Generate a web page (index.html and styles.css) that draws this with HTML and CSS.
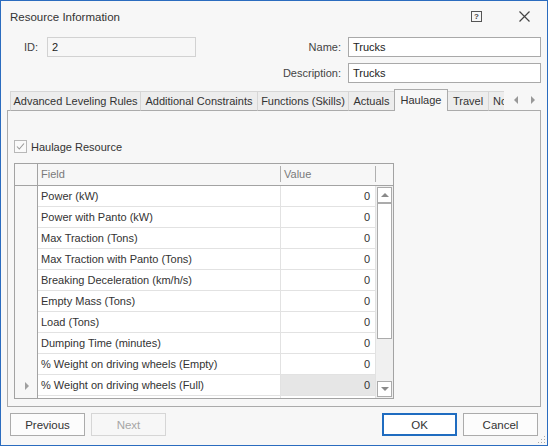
FILE: index.html
```html
<!DOCTYPE html>
<html lang="en">
<head>
    <meta charset="UTF-8">
    <title>Resource Information</title>
    <link rel="stylesheet" href="styles.css">
</head>
<body>

<div class="window">
    <!-- title bar -->
    <div class="titlebar">
        <span class="title">Resource Information</span>
        <span class="tb-help">?</span>
        <span class="tb-close">
            <svg width="11" height="11" viewBox="0 0 11 11"><path d="M0.5 0.5 L10.5 10.5 M10.5 0.5 L0.5 10.5" stroke="#444" stroke-width="1.2" fill="none"/></svg>
        </span>
    </div>

    <!-- ID / Name / Description -->
    <div class="info">
        <span class="lbl">ID:</span>
        <div class="textbox disabled id-box">2</div>
        <span class="lbl lbl-right">Name:</span>
        <div class="textbox">Trucks</div>
        <span class="lbl lbl-right row2">Description:</span>
        <div class="textbox row2">Trucks</div>
    </div>

    <!-- tabs -->
    <div class="tabstrip">
        <div class="tabs">
            <div class="tab" style="width:131px">Advanced Leveling Rules</div>
            <div class="tab" style="width:118px">Additional Constraints</div>
            <div class="tab" style="width:92px">Functions (Skills)</div>
            <div class="tab" style="width:47px">Actuals</div>
            <div class="tab active" style="width:54px">Haulage</div>
            <div class="tab" style="width:42px">Travel</div>
            <div class="tab tab-cut">Notes</div>
        </div>
        <div class="tab-arrows">
            <span class="arrow-left"></span>
            <span class="arrow-right"></span>
        </div>
    </div>

    <div class="page">
        <div class="check-row">
            <span class="cb">
                <svg width="11" height="11" viewBox="0 0 11 11"><path d="M2 5.5 L4.3 8 L9 2.5" stroke="#999" stroke-width="1.1" fill="none"/></svg>
            </span>
            <span class="cb-label">Haulage Resource</span>
        </div>

        <div class="grid">
            <div class="grid-head">
                <div class="h-ind"></div>
                <div class="h-cell">Field</div>
                <div class="h-cell">Value</div>
                <div class="h-end"></div>
            </div>
            <div class="grid-body">
                <div class="rows">
                    <div class="row"><div class="ind"></div><div class="c-field">Power (kW)</div><div class="c-val">0</div></div>
                    <div class="row"><div class="ind"></div><div class="c-field">Power with Panto (kW)</div><div class="c-val">0</div></div>
                    <div class="row"><div class="ind"></div><div class="c-field">Max Traction (Tons)</div><div class="c-val">0</div></div>
                    <div class="row"><div class="ind"></div><div class="c-field">Max Traction with Panto (Tons)</div><div class="c-val">0</div></div>
                    <div class="row"><div class="ind"></div><div class="c-field">Breaking Deceleration (km/h/s)</div><div class="c-val">0</div></div>
                    <div class="row"><div class="ind"></div><div class="c-field">Empty Mass (Tons)</div><div class="c-val">0</div></div>
                    <div class="row"><div class="ind"></div><div class="c-field">Load (Tons)</div><div class="c-val">0</div></div>
                    <div class="row"><div class="ind"></div><div class="c-field">Dumping Time (minutes)</div><div class="c-val">0</div></div>
                    <div class="row"><div class="ind"></div><div class="c-field">% Weight on driving wheels (Empty)</div><div class="c-val">0</div></div>
                    <div class="row"><div class="ind"><span class="focus-mark"></span></div><div class="c-field">% Weight on driving wheels (Full)</div><div class="c-val selected">0</div></div>
                    <div class="row"><div class="ind"></div><div class="c-field"></div><div class="c-val"></div></div>
                </div>
                <div class="vscroll">
                    <div class="sb-btn"><span class="sb-up"></span></div>
                    <div class="sb-thumb"></div>
                    <div class="sb-track"></div>
                    <div class="sb-btn"><span class="sb-down"></span></div>
                </div>
            </div>
        </div>
    </div>

    <!-- buttons -->
    <div class="footer">
        <button class="btn">Previous</button>
        <button class="btn" disabled>Next</button>
        <span class="spacer"></span>
        <button class="btn btn-default">OK</button>
        <button class="btn">Cancel</button>
    </div>

    <svg class="grip" width="8" height="8" viewBox="0 0 8 8">
        <rect x="6" y="0" width="1" height="1" fill="#a8a8a8"/>
        <rect x="3" y="3" width="1" height="1" fill="#a8a8a8"/>
        <rect x="6" y="3" width="1" height="1" fill="#a8a8a8"/>
        <rect x="0" y="6" width="1" height="1" fill="#a8a8a8"/>
        <rect x="3" y="6" width="1" height="1" fill="#a8a8a8"/>
        <rect x="6" y="6" width="1" height="1" fill="#a8a8a8"/>
    </svg>
</div>

</body>
</html>
```

FILE: styles.css
```css
body {
    margin: 0;
    background-color: #f7f7f7;
    font-family: "Liberation Sans", Arial, sans-serif;
    font-size: 11px;
    color: #333;
}

.window {
    position: relative;
    width: 548px;
    height: 446px;
    box-sizing: border-box;
    border: 1px solid #2b6cbf;
    background-color: #f7f7f7;
    display: flex;
    flex-direction: column;
}

/* title bar */
.titlebar {
    height: 31px;
    display: flex;
    align-items: center;
    padding-left: 9px;
    padding-right: 17px;
}

.title {
    flex: 1;
    font-size: 11.5px;
    color: #333;
}

.tb-help {
    width: 9px;
    height: 9px;
    border: 1px solid #555;
    font-size: 8px;
    font-weight: bold;
    line-height: 9px;
    text-align: center;
    color: #444;
    margin-right: 37px;
}

.tb-close {
    width: 11px;
    height: 11px;
    display: flex;
}

/* ID / Name / Description */
.info {
    display: grid;
    grid-template-columns: auto 151px 1fr 193px;
    grid-auto-rows: 20px;
    column-gap: 7px;
    row-gap: 6px;
    margin-top: 5px;
    padding: 0 6px 0 23px;
}

.lbl {
    align-self: center;
    color: #444;
}

.lbl-right {
    justify-self: end;
    grid-column: 3;
}

.row2 {
    grid-row: 2;
}

.textbox {
    box-sizing: border-box;
    border: 1px solid #a9a9a9;
    background-color: #fff;
    padding-left: 4px;
    line-height: 18px;
    color: #222;
}

.textbox.row2 {
    grid-column: 4;
}

.textbox.disabled {
    border-color: #d2d2d2;
    background-color: #f7f7f7;
}

.id-box {
    margin-left: 2px;
}

/* tabs */
.tabstrip {
    display: flex;
    align-items: flex-end;
    height: 21px;
    margin: 6px 6px 0 9px;
    position: relative;
    z-index: 2;
}

.tabs {
    display: flex;
    align-items: flex-end;
    width: 494px;
    overflow: hidden;
    height: 22px;
    margin-bottom: -1px;
}

.tab {
    flex-shrink: 0;
    height: 20px;
    box-sizing: border-box;
    border: 1px solid #d6d6d6;
    border-bottom: 1px solid #ababab;
    background-color: #ededed;
    margin-right: -1px;
    line-height: 18px;
    text-align: center;
    color: #333;
}

.tab.active {
    height: 22px;
    border-color: #ababab;
    border-bottom: none;
    background-color: #f7f7f7;
    line-height: 20px;
    position: relative;
    z-index: 1;
}

.tab-cut {
    width: 40px;
    text-align: left;
    padding-left: 4px;
}

.tab-arrows {
    display: flex;
    align-items: center;
    height: 21px;
    gap: 13px;
    padding-left: 10px;
}

.arrow-left,
.arrow-right {
    width: 0;
    height: 0;
    border-top: 4px solid transparent;
    border-bottom: 4px solid transparent;
}

.arrow-left {
    border-right: 4px solid #999;
}

.arrow-right {
    border-left: 4px solid #999;
}

/* tab page */
.page {
    margin: 0 6px;
    height: 297px;
    box-sizing: border-box;
    border: 1px solid #ababab;
    padding: 29px 0 0 6px;
}

.check-row {
    display: flex;
    align-items: center;
    height: 13px;
}

.cb {
    width: 11px;
    height: 11px;
    border: 1px solid #b8b8b8;
    background-color: #fafafa;
    display: flex;
}

.cb-label {
    margin-left: 4px;
    color: #333;
    line-height: 12px;
}

/* grid */
.grid {
    margin-top: 10px;
    width: 380px;
    height: 236px;
    box-sizing: border-box;
    border: 1px solid #a3a3a3;
    background-color: #fff;
    display: flex;
    flex-direction: column;
    overflow: hidden;
}

.grid-head {
    display: grid;
    grid-template-columns: 23px 243px 95px 17px;
    height: 22px;
    flex-shrink: 0;
    box-sizing: border-box;
    border-bottom: 1px solid #a3a3a3;
    background-color: #f7f7f7;
}

.h-ind {
    border-right: 1px solid #a3a3a3;
}

.h-cell {
    position: relative;
    padding-left: 3px;
    line-height: 21px;
    color: #7a7a7a;
}

.h-cell::after {
    content: "";
    position: absolute;
    right: 0;
    top: 2px;
    bottom: 3px;
    width: 1px;
    background-color: #b0b0b0;
}

.grid-body {
    display: flex;
    flex: 1;
    overflow: hidden;
}

.rows {
    flex: 1;
    overflow: hidden;
}

.row {
    display: grid;
    grid-template-columns: 23px 243px 95px;
    height: 21px;
}

.ind {
    background-color: #f7f7f7;
    border-right: 1px solid #a3a3a3;
    display: flex;
    align-items: center;
    justify-content: center;
}

.focus-mark {
    width: 0;
    height: 0;
    border-top: 4px solid transparent;
    border-bottom: 4px solid transparent;
    border-left: 4px solid #a0a0a0;
    margin-left: 1px;
}

.c-field,
.c-val {
    box-sizing: border-box;
    border-right: 1px solid #e2e2e2;
    border-bottom: 1px solid #e2e2e2;
    line-height: 20px;
    color: #333;
    white-space: nowrap;
}

.c-field {
    padding-left: 3px;
}

.c-val {
    text-align: right;
    padding-right: 5px;
}

.c-val.selected {
    background-color: #e6e6e6;
}

.vscroll {
    width: 17px;
    box-sizing: border-box;
    padding: 1px;
    background-color: #f0f0f0;
    display: flex;
    flex-direction: column;
}

.sb-btn {
    height: 16px;
    flex-shrink: 0;
    box-sizing: border-box;
    border: 1px solid #ababab;
    background-color: #fff;
    display: flex;
    align-items: center;
    justify-content: center;
}

.sb-up,
.sb-down {
    width: 0;
    height: 0;
    border-left: 4px solid transparent;
    border-right: 4px solid transparent;
}

.sb-up {
    border-bottom: 4px solid #8a8a8a;
}

.sb-down {
    border-top: 4px solid #8a8a8a;
}

.sb-thumb {
    height: 136px;
    flex-shrink: 0;
    box-sizing: border-box;
    border: 1px solid #ababab;
    background-color: #fff;
}

.sb-track {
    flex: 1;
}

/* buttons */
.footer {
    display: flex;
    gap: 6px;
    margin-top: 6px;
    padding: 0 9px;
}

.spacer {
    flex: 1;
}

.btn {
    width: 75px;
    height: 23px;
    box-sizing: border-box;
    border: 1px solid #ababab;
    background-color: #fcfcfc;
    font-family: "Liberation Sans", Arial, sans-serif;
    font-size: 11.5px;
    color: #333;
    padding: 0;
}

.btn:disabled {
    border-color: #d6d6d6;
    background-color: #f7f7f7;
    color: #a6a6a6;
}

.btn-default {
    border: 2px solid #1f6cc0;
    background-color: #fff;
}

.grip {
    position: absolute;
    right: 1px;
    bottom: 1px;
}
```
